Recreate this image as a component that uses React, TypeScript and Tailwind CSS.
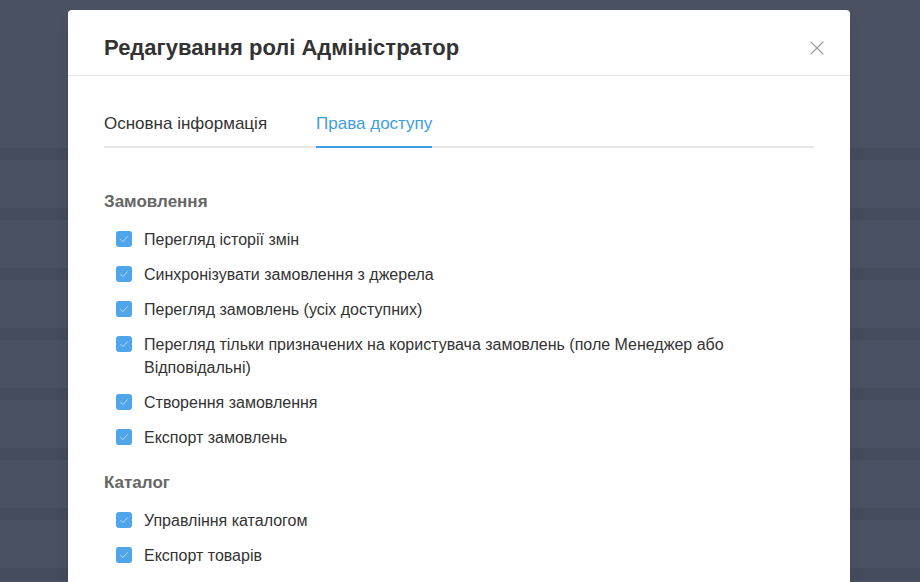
import { X } from "lucide-react";

const sections = [
  {
    title: "Замовлення",
    items: [
      "Перегляд історії змін",
      "Синхронізувати замовлення з джерела",
      "Перегляд замовлень (усіх доступних)",
      "Перегляд тільки призначених на користувача замовлень (поле Менеджер або Відповідальні)",
      "Створення замовлення",
      "Експорт замовлень",
    ],
  },
  {
    title: "Каталог",
    items: ["Управління каталогом", "Експорт товарів"],
  },
];

function Checkbox() {
  return (
    <span className="mt-[3px] flex h-4 w-4 shrink-0 items-center justify-center rounded-[3px] bg-[#4ea5ea]">
      <svg viewBox="0 0 16 16" className="h-3 w-3" fill="none">
        <path d="M3.5 8.5l3 3 6-6.5" stroke="#bfe0fb" strokeWidth="1.2" strokeLinecap="round" strokeLinejoin="round" />
      </svg>
    </span>
  );
}

export default function App() {
  return (
    <div className="relative h-[582px] w-[920px] overflow-hidden bg-[#4a5161] font-['Liberation_Sans',Arial,sans-serif]">
      {/* background table rows behind overlay */}
      <div className="absolute inset-0 flex flex-col pt-[148px]">
        {Array.from({ length: 8 }).map((_, i) => (
          <div key={i} className="h-[60px] shrink-0 border-t-[12px] border-[#444b5a]" />
        ))}
      </div>

      <div className="relative ml-[68px] mt-[10px] w-[782px] rounded-[4px] bg-white shadow-lg">
        <div className="flex items-center justify-between border-b border-[#e8e8e8] pl-9 pr-[21px] pt-6 pb-[13px]">
          <h1 className="text-[22px] font-bold leading-[28px] text-[#333]">Редагування ролі Адміністратор</h1>
          <X className="h-6 w-6 text-[#9a9a9a]" strokeWidth={1.1} />
        </div>

        <div className="px-9 pt-[36px] pb-10">
          <div className="flex gap-[49px] border-b-2 border-[#e6e6e6]">
            <div className="pb-[10px] text-[17px] leading-6 text-[#333]">Основна інформація</div>
            <div className="-mb-[2px] border-b-2 border-[#3d9ee0] pb-[10px] text-[17px] leading-6 text-[#3d9ee0]">
              Права доступу
            </div>
          </div>

          <div className="mt-[42px] flex flex-col gap-[21.5px]">
            {sections.map((s) => (
              <div key={s.title}>
                <h2 className="text-[17px] font-bold leading-6 text-[#666]">{s.title}</h2>
                <ul className="mt-[14px] flex flex-col gap-3 pl-3">
                  {s.items.map((it) => (
                    <li key={it} className="flex gap-3 text-[16px] leading-[23px] text-[#333]">
                      <Checkbox />
                      <span>{it}</span>
                    </li>
                  ))}
                </ul>
              </div>
            ))}
          </div>
        </div>
      </div>
    </div>
  );
}
